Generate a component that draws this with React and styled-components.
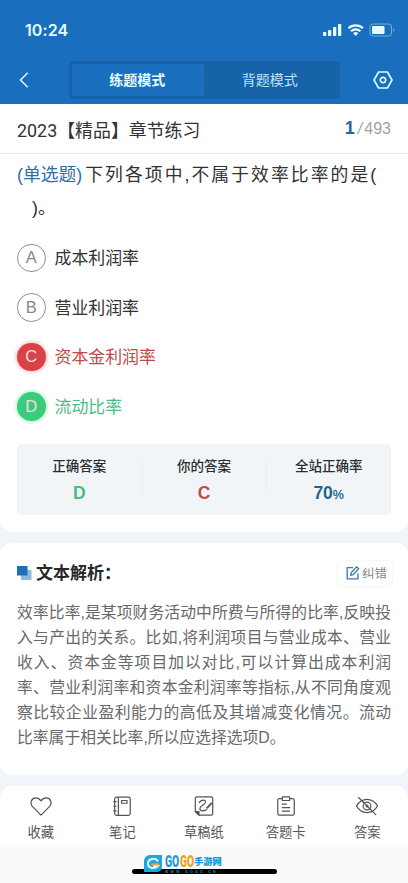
import React from 'react'
import styled, { createGlobalStyle } from 'styled-components'

const OPTIONS = [
    { key: 'A', text: '成本利润率' },
    { key: 'B', text: '营业利润率' },
    { key: 'C', text: '资本金利润率', state: 'wrong' },
    { key: 'D', text: '流动比率', state: 'right' },
]

const RESULTS = [
    { label: '正确答案', value: 'D', color: '#45bd83' },
    { label: '你的答案', value: 'C', color: '#c34a4b' },
    { label: '全站正确率', value: '70', unit: '%', color: '#23658f' },
]

const ANALYSIS = [
    '效率比率,是某项财务活动中所费与所得的比率,反映投',
    '入与产出的关系。比如,将利润项目与营业成本、营业',
    '收入、资本金等项目加以对比,可以计算出成本利润',
    '率、营业利润率和资本金利润率等指标,从不同角度观',
    '察比较企业盈利能力的高低及其增减变化情况。流动',
    '比率属于相关比率,所以应选择选项D。',
]

const STATE_COLORS = {
    wrong: { fill: '#d8434a', text: '#c04a49', glow: '#fbd3d1' },
    right: { fill: '#3bcb7d', text: '#4cbb88', glow: '#c9f7dc' },
}

const HeartIcon = () => (
    <Icon viewBox="0 0 24 24">
        <path d="M12 22 2.800 12.700C-.7 9 1.500 3.200 6.300 3.200c2.400 0 4.300 1.200 5.700 3.300 1.400-2.100 3.300-3.300 5.700-3.300 4.800 0 7 5.800 3.500 9.500Z" />
    </Icon>
)

const NotebookIcon = () => (
    <Icon viewBox="0 0 24 24">
        <rect x="4" y="2.300" width="17" height="20" rx="2" />
        <path d="M8 2.300v20M2.500 7.300h3.500M2.500 12.300h3.500M2.500 17.300h3.500" />
        <rect x="11.500" y="6" width="6" height="3" />
    </Icon>
)

const DraftIcon = () => (
    <Icon viewBox="0 0 24 24">
        <path d="M6.500 22H20a1.500 1.500 0 0 0 1.500-1.500v-17A1.500 1.500 0 0 0 20 2H4a1.500 1.500 0 0 0-1.500 1.500V18Z" />
        <path d="M2.800 18h3.700v4Z" fill="#515456" />
        <path d="M6.500 8.500C9 5 14.500 4.500 13.500 8 12.500 11 7.500 12 7.500 15c0 3 5.500 3 7.500.5" />
        <path d="m15 14.500 5.500-6" strokeWidth="2" />
    </Icon>
)

const CardIcon = () => (
    <Icon viewBox="0 0 24 24">
        <path d="M8 4H4.500A1.500 1.500 0 0 0 3 5.500v15A1.500 1.500 0 0 0 4.500 22h15a1.500 1.500 0 0 0 1.500-1.500v-15A1.500 1.500 0 0 0 19.500 4H16" />
        <path d="M8 2h8v4H8ZM7.500 10H13M7.500 13.800h9M7.500 17.600h9" />
    </Icon>
)

const EyeOffIcon = () => (
    <Icon viewBox="0 0 24 24">
        <path d="M.5 12C6.500 2.500 17.500 2.500 23.500 12 17.500 21.500 6.500 21.500.5 12Z" />
        <circle cx="12" cy="12" r="4.200" />
        <circle cx="12" cy="12" r="1" />
        <path d="M2.500 2.500 22 22" />
    </Icon>
)

const ACTIONS = [
    { label: '收藏', icon: <HeartIcon /> },
    { label: '笔记', icon: <NotebookIcon /> },
    { label: '草稿纸', icon: <DraftIcon /> },
    { label: '答题卡', icon: <CardIcon /> },
    { label: '答案', icon: <EyeOffIcon /> },
]

const StatusIcons = () => (
    <svg width="73" height="16" viewBox="0 0 73 16">
        <g fill="#e4fbff">
            <rect x="0" y="10" width="3.300" height="4" rx=".8" />
            <rect x="5" y="8" width="3.300" height="6" rx=".8" />
            <rect x="10" y="5" width="3.300" height="9" rx=".8" />
            <rect x="15" y="2" width="3.300" height="12" rx=".8" />
            <path d="m32.700 14-2.600-2.700a3.800 3.800 0 0 1 5.200 0Z" />
            <rect x="49" y="4" width="12.500" height="8" rx="1" />
        </g>
        <path d="M25.400 6.300a10.600 10.600 0 0 1 14.600 0M28 9.300a6.700 6.700 0 0 1 9.400 0" fill="none" stroke="#e4fbff" strokeWidth="2.200" />
        <rect x="47" y="2" width="21.500" height="12" rx="3" fill="none" stroke="#73afdc" strokeWidth="1" />
        <path d="M70.300 6v4c1.500-.6 1.500-3.400 0-4Z" fill="#73afdc" />
    </svg>
)

const Watermark = () => (
    <WatermarkBox>
        <svg width="18" height="17" viewBox="0 0 18 17">
            <path d="M6 0h12v12a5 5 0 0 1-5 5H0V6a6 6 0 0 1 6-6Z" fill="#21a4df" />
            <path d="M14 6.500C12 2.500 4 3 4 8.500S11 14 14 11H9" fill="none" stroke="#dff8ff" strokeWidth="2" />
            <path d="M7 8.500h7c1.500 0 2 2 0 2H9c-2 0-2-2-2-2Z" fill="#f5a83a" />
        </svg>
        <WatermarkText>
            <WatermarkName>
                <Letters $color="#1597db">GO</Letters>
                <Letters $color="#f69b18">GO</Letters>
                <Site>手游网</Site>
            </WatermarkName>
            <WatermarkUrl>WWW.GOGO.CN</WatermarkUrl>
        </WatermarkText>
    </WatermarkBox>
)

export default function App() {
    const renderOptions = () =>
        OPTIONS.map(({ key, text, state }) => (
            <Option key={key}>
                <OptionMark $state={state}>{key}</OptionMark>
                <OptionText $state={state}>{text}</OptionText>
            </Option>
        ))

    const renderResults = () =>
        RESULTS.map(({ label, value, unit, color }) => (
            <Result key={label}>
                <ResultLabel>{label}</ResultLabel>
                <ResultValue $color={color}>
                    {value}
                    {unit && <small>{unit}</small>}
                </ResultValue>
            </Result>
        ))

    return (
        <Page>
            <GlobalStyle />
            <Header>
                <StatusBar>
                    <Time>10:24</Time>
                    <StatusIcons />
                </StatusBar>
                <NavBar>
                    <svg width="10" height="16" viewBox="0 0 10 16">
                        <path d="M8.700.8 1.500 8l7.200 7.200" fill="none" stroke="#d9f5ff" strokeWidth="1.600" />
                    </svg>
                    <Tabs>
                        <Tab $active>练题模式</Tab>
                        <Tab>背题模式</Tab>
                    </Tabs>
                    <svg width="20" height="18" viewBox="0 0 20 18">
                        <g fill="none" stroke="#d5fbff" strokeWidth="1.700" strokeLinejoin="round">
                            <path d="M5.600 1h8.800L19 9l-4.600 8H5.600L1 9Z" />
                            <circle cx="10" cy="9" r="2.700" />
                        </g>
                    </svg>
                </NavBar>
            </Header>

            <QuestionCard>
                <Chapter>
                    <ChapterName>2023【精品】章节练习</ChapterName>
                    <Counter><b>1</b><i>/</i>493</Counter>
                </Chapter>
                <Question>
                    <FirstLine>
                        <Kind>(单选题)</Kind>
                        <Stem>下列各项中,不属于效率比率的是(</Stem>
                    </FirstLine>
                    <SecondLine>)。</SecondLine>
                </Question>
                <Options>{renderOptions()}</Options>
                <Results>{renderResults()}</Results>
            </QuestionCard>

            <AnalysisCard>
                <AnalysisHead>
                    <svg width="15" height="15" viewBox="0 0 15 15">
                        <rect x="4" y="4" width="10.500" height="10" fill="#8cb9df" />
                        <rect width="10.500" height="9.500" fill="#1d6fb8" />
                    </svg>
                    <AnalysisTitle>文本解析：</AnalysisTitle>
                    <ReportButton>
                        <svg width="14" height="14" viewBox="0 0 14 14" fill="none" stroke="#3b78b0" strokeWidth="1.300">
                            <path d="M7 1.700H1.200v11.100h10.700V7.300" />
                            <path d="m5.200 6.800 5.500-6 2 1.900-5.500 6-2.400.5Z" />
                        </svg>
                        纠错
                    </ReportButton>
                </AnalysisHead>
                <AnalysisText>
                    {ANALYSIS.map((line, index) => (
                        <Line key={line} $last={index === ANALYSIS.length - 1}>{line}</Line>
                    ))}
                </AnalysisText>
            </AnalysisCard>

            <ActionBar>
                {ACTIONS.map(({ label, icon }) => (
                    <Action key={label}>
                        {icon}
                        {label}
                    </Action>
                ))}
            </ActionBar>
            <HomeArea>
                <HomeIndicator />
                <Watermark />
            </HomeArea>
        </Page>
    )
}

const GlobalStyle = createGlobalStyle`
    * {
        box-sizing: border-box;
    }
    body {
        margin: 0;
    }
    button {
        border: 0;
        padding: 0;
        font: inherit;
    }
    svg {
        display: block;
        flex-shrink: 0;
    }
`;

const Page = styled.div`
    display: flex;
    flex-direction: column;
    width: 408px;
    height: 883px;
    overflow: hidden;
    background: #f1f5fa;
    color: #303234;
    font-family: "Liberation Sans", "Noto Sans CJK SC", sans-serif;
    white-space: nowrap;
`;

const Header = styled.header`
    height: 104px;
    background: #196fbd;
`;

const StatusBar = styled.div`
    display: flex;
    align-items: center;
    justify-content: space-between;
    height: 61px;
    padding: 0 12px 2px 25px;
`;

const Time = styled.span`
    color: #e4fbff;
    font: 600 16px/20px Inter, sans-serif;
    letter-spacing: .1px;
`;

const NavBar = styled.nav`
    display: flex;
    align-items: center;
    justify-content: space-between;
    height: 38px;
    padding: 0 15px 0 19px;
`;

const Tabs = styled.div`
    display: flex;
    width: 271px;
    height: 38px;
    margin-left: 6px;
    padding: 3px;
    border-radius: 4px;
    background: #1763a9;
`;

const Tab = styled.button`
    flex: 1;
    padding: 0 1px 2px 0;
    border-radius: 3px;
    background: ${({ $active }) => ($active ? '#1a70be' : 'transparent')};
    color: ${({ $active }) => ($active ? '#e4fbff' : '#bfe2f4')};
    font-size: 14px;
    font-weight: ${({ $active }) => ($active ? 700 : 400)};
`;

const QuestionCard = styled.main`
    height: 428px;
    border-radius: 0 0 12px 12px;
    background: #fff;
`;

const Chapter = styled.div`
    display: flex;
    align-items: center;
    justify-content: space-between;
    height: 50px;
    padding: 0 17px;
    border-bottom: 1px solid #e9ebec;
`;

const ChapterName = styled.span`
    font-family: Roboto, "Noto Sans CJK SC", sans-serif;
    font-size: 17.900px;
`;

const Counter = styled.span`
    color: #a0a2a4;
    font-size: 16px;

    b {
        color: #23699f;
        font-size: 18px;
    }
    i {
        margin: 0 2px 0 3px;
    }
`;

const Question = styled.div`
    padding: 5px 17px 0;
    font-size: 17.800px;
    line-height: 33px;
`;

const FirstLine = styled.div`
    display: flex;
    gap: 3px;
`;

const Kind = styled.span`
    color: #2a719f;
`;

const Stem = styled.span`
    width: 291px;
    text-align: justify;
    text-align-last: justify;
`;

const SecondLine = styled.div`
    padding-left: 15px;
`;

const Options = styled.div`
    display: flex;
    flex-direction: column;
    gap: 21px;
    padding: 18.500px 17px 0;
`;

const Option = styled.div`
    display: flex;
    align-items: center;
    gap: 9px;
    height: 28.500px;
`;

const OptionMark = styled.span`
    display: grid;
    place-items: center;
    width: 28.500px;
    height: 28.500px;
    border: 1px solid ${({ $state }) => ($state ? 'transparent' : '#8c8f91')};
    border-radius: 50%;
    background: ${({ $state }) => ($state ? STATE_COLORS[$state].fill : '#fff')};
    background-clip: border-box;
    box-shadow: ${({ $state }) => ($state ? `0 0 3px 2px ${STATE_COLORS[$state].glow}` : 'none')};
    color: ${({ $state }) => ($state ? '#f5dddd' : '#85888a')};
    font-size: 16.500px;
`;

const OptionText = styled.span`
    padding-bottom: 2px;
    color: ${({ $state }) => ($state ? STATE_COLORS[$state].text : 'inherit')};
    font-size: 16.900px;
`;

const Results = styled.div`
    display: flex;
    height: 71px;
    margin: 23.500px 17px 0;
    border-radius: 5px;
    background: #f1f5f8;
`;

const Result = styled.div`
    flex: 1;
    display: flex;
    flex-direction: column;
    align-items: center;
    padding-top: 13px;

    & + & {
        background: linear-gradient(#e9eef2, #e9eef2) 0 18px / 1px 32px no-repeat;
    }
`;

const ResultLabel = styled.span`
    color: #2b2d30;
    font-size: 13.500px;
    font-weight: 500;
    line-height: 20px;
`;

const ResultValue = styled.span`
    margin-top: 5px;
    color: ${({ $color }) => $color};
    font-size: 17.500px;
    font-weight: 700;
    line-height: 22px;

    small {
        font-size: 12.500px;
        font-weight: 400;
        -webkit-text-stroke: .3px;
    }
`;

const AnalysisCard = styled.section`
    height: 232px;
    margin-top: 11px;
    padding: 15px 17px 0;
    border-radius: 12px;
    background: #fff;
`;

const AnalysisHead = styled.div`
    display: flex;
    align-items: center;
    height: 30px;
`;

const AnalysisTitle = styled.h2`
    flex: 1;
    margin: 2px 0 0 4px;
    color: #25282b;
    font-size: 17px;
    font-weight: 700;
    line-height: 26px;
`;

const ReportButton = styled.button`
    display: flex;
    align-items: center;
    gap: 2px;
    height: 25px;
    margin-right: -1px;
    padding: 0 5px 1px 8px;
    border-radius: 4px;
    background: #fff;
    box-shadow: 0 0 3px #eee9e4;
    color: #85888a;
    font-size: 12.500px;
`;

const AnalysisText = styled.div`
    margin-top: 12px;
    color: #66696b;
    font-size: 15.800px;
    line-height: 25px;
`;

const Line = styled.div`
    height: 25px;
    text-align-last: ${({ $last }) => ($last ? 'left' : 'justify')};
`;

const ActionBar = styled.footer`
    display: flex;
    height: 59px;
    margin-top: 11px;
    border-radius: 12px 12px 0 0;
    background: #fff;
`;

const Action = styled.button`
    flex: 1;
    display: flex;
    flex-direction: column;
    align-items: center;
    gap: 6px;
    padding-top: 9px;
    background: transparent;
    color: #55585a;
    font-size: 13.300px;
    line-height: 20px;
`;

const Icon = styled.svg`
    width: 22px;
    height: 22px;
    fill: none;
    stroke: #515456;
    stroke-width: 1.300;
    stroke-linejoin: round;
`;

const HomeArea = styled.div`
    position: relative;
    flex: 1;
    padding: 24px 0 0 132px;
    background: #fafafa;
`;

const HomeIndicator = styled.div`
    width: 145px;
    height: 5px;
    border-radius: 3px;
    background: #000;
`;

/* site mark printed across the home indicator */
const WatermarkBox = styled.div`
    position: absolute;
    top: 10px;
    left: 144px;
    display: flex;
    gap: 3px;
`;

const WatermarkText = styled.div`
    display: flex;
    flex-direction: column;
`;

const WatermarkName = styled.div`
    display: flex;
    align-items: center;
    height: 14px;
`;

const Letters = styled.span`
    width: 14.500px;
    color: ${({ $color }) => $color};
    font: 900 16px/14px Roboto, sans-serif;
    transform: scaleX(.64);
    transform-origin: left;
`;

const Site = styled.span`
    color: #1597db;
    font-size: 9.300px;
    font-weight: 900;
    line-height: 14px;
`;

const WatermarkUrl = styled.span`
    margin-top: 1px;
    color: #258eaa;
    font-size: 3.500px;
    font-weight: 700;
    line-height: 4px;
    letter-spacing: 2.300px;
`;
